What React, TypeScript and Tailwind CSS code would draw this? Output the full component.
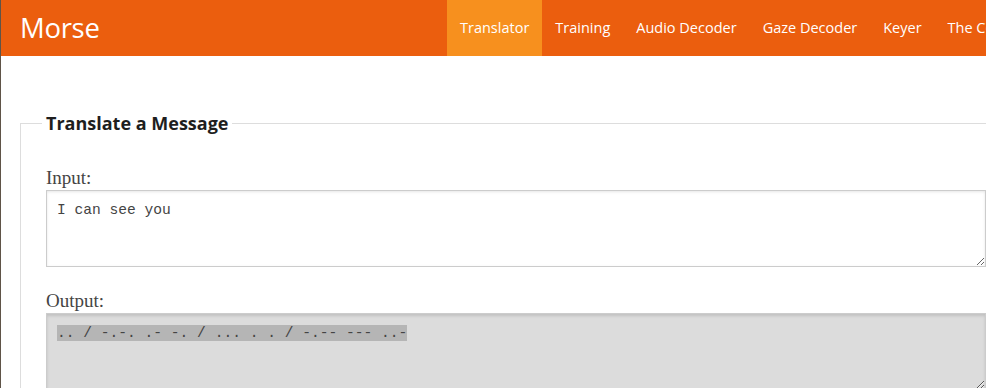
import { useState } from "react";

const navItems = ["Translator", "Training", "Audio Decoder", "Gaze Decoder", "Keyer", "The Code"];

export default function App() {
  const [text, setText] = useState("I can see you");
  const output = ".. / -.-. .- -. / ... . . / -.-- --- ..-";

  return (
    <div className="min-h-[388px] w-[986px] overflow-hidden border-l border-l-[#5f5448] bg-white">
      <header className="flex h-[56px] items-stretch overflow-hidden bg-[#eb5e0e] pl-[19px] font-['Open_Sans',sans-serif] text-white">
        <div className="flex w-[427px] shrink-0 items-center text-[27.5px] leading-none tracking-[-0.3px]">
          Morse
        </div>
        <nav className="flex shrink-0">
          {navItems.map((item, i) => (
            <a
              key={item}
              className={`flex items-center px-[13px] text-[14.5px] ${i == 0 ? "bg-[#f7901e]" : ""}`}
            >
              {item}
            </a>
          ))}
        </nav>
      </header>

      <main className="pl-[19px] pt-[55px]">
        <fieldset className="border border-r-0 border-b-0 border-[#dddddd] pl-[25px]">
          <legend className="-ml-1 px-1 font-['Open_Sans',sans-serif] text-[18px] leading-[24px] font-bold text-[#1e1e1e]">
            Translate a Message
          </legend>

          <label className="mt-[31px] block font-['Liberation_Serif',serif] text-[19px] leading-[24px] text-[#444]">
            Input:
          </label>
          <textarea
            value={text}
            onChange={(e) => setText(e.target.value)}
            className="block h-[77px] w-[940px] border border-[#cccccc] bg-white px-[10px] py-[10px] font-['Liberation_Mono',monospace] text-[14.6px] leading-[18px] text-[#444] shadow-[inset_0_1px_3px_rgba(0,0,0,0.1)] outline-none"
          />

          <label className="mt-[22px] block font-['Liberation_Serif',serif] text-[19px] leading-[24px] text-[#444]">
            Output:
          </label>
          <div className="h-[77px] w-[940px] resize overflow-auto border border-[#cccccc] bg-[#dcdcdc] px-[10px] py-[10px] font-['Liberation_Mono',monospace] text-[14.6px] leading-[18px] whitespace-pre text-[#444] shadow-[inset_0_2px_3px_rgba(0,0,0,0.12)]">
            <span className="bg-[#b5b5b5]">{output}</span>
          </div>
        </fieldset>
      </main>
    </div>
  );
}
